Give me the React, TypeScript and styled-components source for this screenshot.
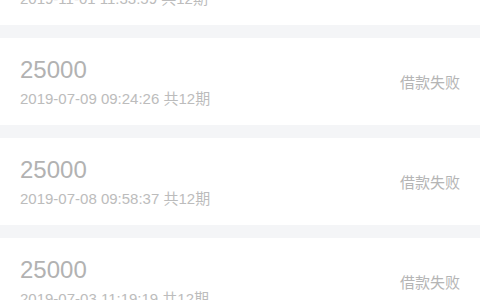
import styled, { createGlobalStyle } from "styled-components";

const GlobalStyle = createGlobalStyle`
  html, body {
    margin: 0;
    padding: 0;
    background: #f4f5f7;
    font-family: "Liberation Sans", "Noto Sans CJK SC", sans-serif;
  }
`;

type Loan = {
  amount: string;
  time: string;
  periods: number;
  status: string;
};

const loans: Loan[] = [
  { amount: "25000", time: "2019-11-01 11:33:59", periods: 12, status: "借款失败" },
  { amount: "25000", time: "2019-07-09 09:24:26", periods: 12, status: "借款失败" },
  { amount: "25000", time: "2019-07-08 09:58:37", periods: 12, status: "借款失败" },
  { amount: "25000", time: "2019-07-03 11:19:19", periods: 12, status: "借款失败" },
];

const Viewport = styled.div`
  width: 480px;
  height: 300px;
  overflow: hidden;
  background: #f4f5f7;
`;

// list is scrolled a bit, first card is half out of view
const List = styled.div`
  display: flex;
  flex-direction: column;
  gap: 13px;
  margin-top: -62px;
`;

const Card = styled.div`
  display: flex;
  align-items: center;
  justify-content: space-between;
  height: 87px;
  box-sizing: border-box;
  padding: 18px 20px 16px;
  background: #fff;
`;

const Info = styled.div`
  display: flex;
  flex-direction: column;
`;

const Amount = styled.div`
  font-size: 24px;
  line-height: 28px;
  color: #b2b2b2;
`;

const Meta = styled.div`
  margin-top: 5px;
  font-size: 15px;
  line-height: 20px;
  color: #bcbcbc;
`;

const Status = styled.div`
  font-size: 15px;
  line-height: 20px;
  color: #b5b5b5;
`;

export default function App() {
  return (
    <Viewport>
      <GlobalStyle />
      <List>
        {loans.map((loan, i) => (
          <Card key={i}>
            <Info>
              <Amount>{loan.amount}</Amount>
              <Meta>
                {loan.time} 共{loan.periods}期
              </Meta>
            </Info>
            <Status>{loan.status}</Status>
          </Card>
        ))}
      </List>
    </Viewport>
  );
}
